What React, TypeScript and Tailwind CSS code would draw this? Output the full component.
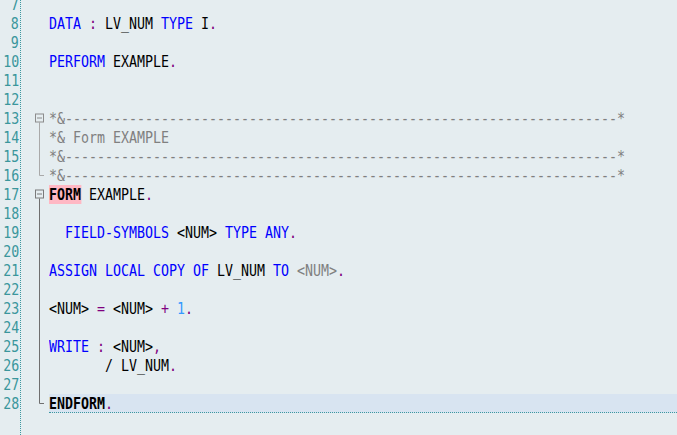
import React from "react";

type Tok = { t: string; c?: string; b?: boolean; bg?: string };

const KW = "text-[#0000ff]";
const OP = "text-[#800080]";
const ID = "text-[#000000]";
const CM = "text-[#808080]";
const NUMC = "text-[#3399ff]";

const dashes = "*&" + "-".repeat(69) + "*";

const lines: Tok[][] = [
  [],
  [
    { t: "DATA", c: KW },
    { t: " " },
    { t: ":", c: OP },
    { t: " LV_NUM ", c: ID },
    { t: "TYPE", c: KW },
    { t: " I", c: ID },
    { t: ".", c: OP },
  ],
  [],
  [
    { t: "PERFORM", c: KW },
    { t: " EXAMPLE", c: ID },
    { t: ".", c: OP },
  ],
  [],
  [],
  [{ t: dashes, c: CM }],
  [{ t: "*& Form EXAMPLE", c: CM }],
  [{ t: dashes, c: CM }],
  [{ t: dashes, c: CM }],
  [
    { t: "FORM", c: ID, b: true, bg: "bg-[#ffb8c4]" },
    { t: " EXAMPLE", c: ID },
    { t: ".", c: OP },
  ],
  [],
  [
    { t: "  FIELD-SYMBOLS", c: KW },
    { t: " <NUM> ", c: ID },
    { t: "TYPE ANY", c: KW },
    { t: ".", c: OP },
  ],
  [],
  [
    { t: "ASSIGN LOCAL COPY OF", c: KW },
    { t: " LV_NUM ", c: ID },
    { t: "TO", c: KW },
    { t: " " },
    { t: "<NUM>", c: CM },
    { t: ".", c: OP },
  ],
  [],
  [
    { t: "<NUM>", c: ID },
    { t: " = ", c: OP },
    { t: "<NUM>", c: ID },
    { t: " + ", c: OP },
    { t: "1", c: NUMC },
    { t: ".", c: OP },
  ],
  [],
  [
    { t: "WRITE", c: KW },
    { t: " : ", c: OP },
    { t: "<NUM>", c: ID },
    { t: ",", c: OP },
  ],
  [
    { t: "       / LV_NUM", c: ID },
    { t: ".", c: OP },
  ],
  [],
  [
    { t: "ENDFORM", c: ID, b: true },
    { t: ".", c: OP },
  ],
];

const FIRST = 7;
const P = 19;
const TOP = -5; // top of first line relative to page

function FoldColumn() {
  // page coordinates -> svg coordinates: x - 21, y - TOP
  const cy = (ln: number) => TOP + (ln - FIRST) * P + 9.5 - TOP;
  const box = (ln: number, color: string) => {
    const c = cy(ln);
    return (
      <g key={"b" + ln}>
        <rect x={14.5} y={c - 4.5} width={8} height={8} fill="#ffffff" fillOpacity={0} stroke={color} strokeWidth={1} />
        <line x1={16} y1={c - 0.5} x2={21} y2={c - 0.5} stroke={color} strokeWidth={1} />
      </g>
    );
  };
  const bracket = (from: number, to: number, color: string) => {
    const y1 = cy(from) + 4;
    const y2 = Math.floor(cy(to)) + 0.5;
    return (
      <path key={"p" + from} d={`M18.5 ${y1} V${y2} H23`} fill="none" stroke={color} strokeWidth={1} />
    );
  };
  return (
    <svg width={28} height={460} className="shrink-0 block">
      {bracket(13, 16, "#a9a9a9")}
      {box(13, "#8c8c8c")}
      {bracket(17, 28, "#6f6f6f")}
      {box(17, "#7a7a7a")}
    </svg>
  );
}

export default function App() {
  const count = 24;
  const nums = Array.from({ length: count }, (_, i) => FIRST + i);
  return (
    <div
      className="w-[677px] h-[435px] overflow-hidden bg-[#e5edf0]"
      style={{ fontFamily: '"DejaVu Sans Mono", "Liberation Mono", monospace' }}
    >
      <div className="flex mt-[-5px] h-[460px] text-[16px] leading-[19px]">
        <div className="w-[21px] shrink-0 border-r border-dotted border-[#3b98a0] text-[#3a969c]">
          {nums.map((n) => (
            <div key={n} className="h-[19px] pr-px flex justify-end">
              <span className="inline-block whitespace-pre origin-right scale-x-[0.8305]">
                {n <= 28 ? String(n) : ""}
              </span>
            </div>
          ))}
        </div>
        <FoldColumn />
        <div className="flex-1 min-w-0 overflow-hidden">
          {lines.map((toks, i) => {
            const ln = FIRST + i;
            const current = ln === 28;
            return (
              <div
                key={ln}
                className={
                  current
                    ? "h-[19px] bg-[#d8e4f1] border-b border-dotted border-[#3b98a0] whitespace-nowrap"
                    : "h-[19px] whitespace-nowrap"
                }
              >
                <span className="inline-block whitespace-pre origin-left scale-x-[0.8305] align-top">
                  {toks.map((tk, j) => (
                    <span
                      key={j}
                      className={[tk.c ?? "text-black", tk.b ? "font-bold" : "", tk.bg ?? ""].join(" ")}
                    >
                      {tk.t}
                    </span>
                  ))}
                </span>
              </div>
            );
          })}
        </div>
      </div>
    </div>
  );
}
